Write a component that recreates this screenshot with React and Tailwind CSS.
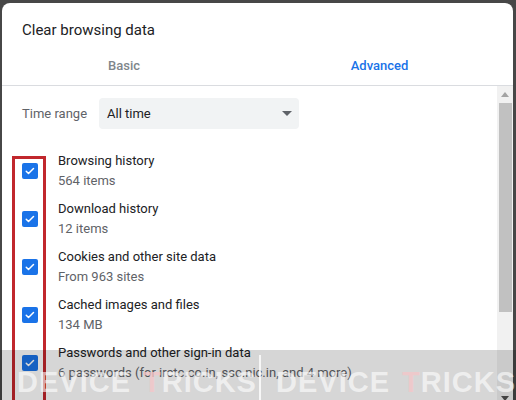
import React from "react";

const items = [
  { label: "Browsing history", sub: "564 items" },
  { label: "Download history", sub: "12 items" },
  { label: "Cookies and other site data", sub: "From 963 sites" },
  { label: "Cached images and files", sub: "134 MB" },
  {
    label: "Passwords and other sign-in data",
    sub: "6 passwords (for irctc.co.in, ssc.nic.in, and 4 more)",
  },
  { label: "Autofill form data", sub: "" },
];

const Checkbox = () => (
  <div className="w-[16px] h-[16px] shrink-0 rounded-[2px] bg-[#1a73e8] flex items-center justify-center">
    <svg width="12" height="12" viewBox="0 0 24 24">
      <path
        d="M4.5 12.5l4.5 4.5 10-10"
        fill="none"
        stroke="#fff"
        strokeWidth="3"
        strokeLinecap="round"
        strokeLinejoin="round"
      />
    </svg>
  </div>
);

const Watermark = () => (
  <div className="flex items-center gap-[4px] font-['Liberation_Sans',sans-serif] font-bold text-[29px] leading-none tracking-[1px] text-white/60">
    <span>DEVICE</span>
    <span className="ml-[8px]">
      <span className="text-[#f4c6c8]/80">T</span>RICKS
    </span>
  </div>
);

const App = () => {
  return (
    <div className="relative w-[516px] h-[400px] overflow-hidden bg-[#474747] pt-[3px] pl-[2px] pr-[3px] font-['Roboto',sans-serif]">
      <div className="bg-white rounded-t-[8px] h-[420px] flex flex-col overflow-hidden">
        {/* Header */}
        <div className="pt-[17px] px-[20px] text-[15px] leading-[20px] text-[#202124]">
          Clear browsing data
        </div>
        <div className="mt-[6px] h-[40px] flex items-center border-b border-[#dadce0] text-[13px] font-medium">
          <div className="w-[244px] text-center text-[#80868b]">Basic</div>
          <div className="w-[267px] text-center text-[#1a73e8]">Advanced</div>
        </div>

        {/* Body */}
        <div className="flex h-[321px]">
          <div className="flex-1 pl-[20px]">
            <div className="mt-[12px] flex items-center h-[31px]">
              <span className="text-[13px] text-[#5f6368] w-[77px] pt-[1px]">Time range</span>
              <div className="w-[200px] h-[31px] rounded-[4px] bg-[#f1f3f4] flex items-center justify-between pl-[8px] pr-[7px]">
                <span className="text-[13px] text-[#202124] pt-[1px]">All time</span>
                <svg width="10" height="5" viewBox="0 0 10 5">
                  <path d="M0 0h10L5 5z" fill="#5f6368" />
                </svg>
              </div>
            </div>

            <div className="mt-[22px] flex flex-col gap-[8px]">
              {items.map((item, i) => (
                <div key={i} className="flex items-center gap-[20px] h-[40px]">
                  <Checkbox />
                  <div className="text-[13px] leading-[20px]">
                    <div className="text-[#202124]">{item.label}</div>
                    <div className="text-[#5f6368]">{item.sub}</div>
                  </div>
                </div>
              ))}
            </div>
          </div>

          {/* Scrollbar */}
          <div className="w-[16px] bg-[#f1f1f1] flex flex-col">
            <div className="h-[17px] flex items-center justify-center">
              <svg width="8" height="5" viewBox="0 0 8 5">
                <path d="M0 5L4 0l4 5z" fill="#a3a3a3" />
              </svg>
            </div>
            <div className="ml-[2px] mr-[1px] h-[209px] bg-[#c1c1c1]" />
            <div className="flex-1" />
            <div className="h-[17px] flex items-center justify-center">
              <svg width="8" height="5" viewBox="0 0 8 5">
                <path d="M0 0h8L4 5z" fill="#505050" />
              </svg>
            </div>
          </div>
        </div>
      </div>

      {/* Red highlight annotation */}
      <div className="absolute left-[12px] top-[156px] w-[34px] h-[260px] border-[3px] border-[#c1272d]" />

      {/* Watermark band */}
      <div className="absolute left-0 right-0 top-[350px] h-[50px] bg-black/[0.16] flex items-center">
        <div className="w-[263px] pl-[17px] pt-[14px]">
          <Watermark />
        </div>
        <div className="w-[2px] h-[47px] mt-[6px] bg-white/80" />
        <div className="pl-[15px] pt-[14px]">
          <Watermark />
        </div>
      </div>
    </div>
  );
};

export default App;
